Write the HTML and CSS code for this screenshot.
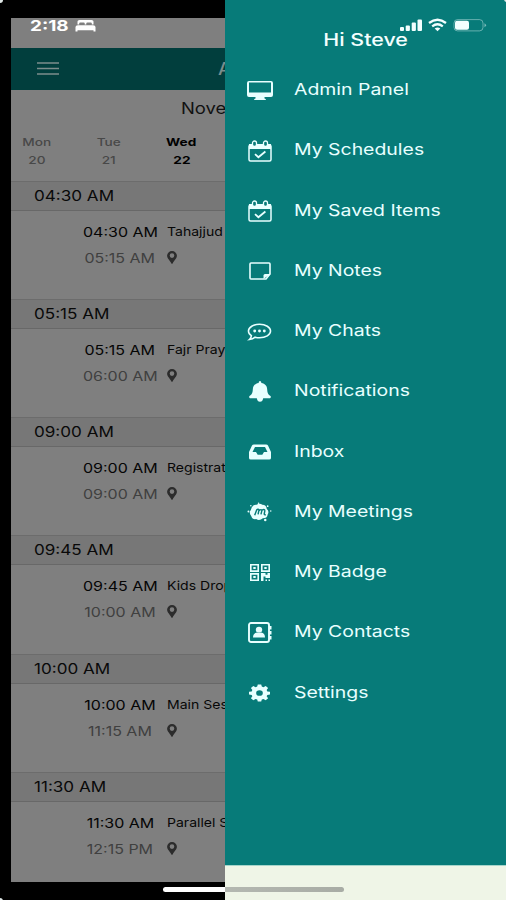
FILE: index.html
```html
<!DOCTYPE html>
<html lang="en">
<head>
<meta charset="utf-8">
<title>Schedule</title>
<link rel="stylesheet" href="styles.css">
</head>
<body>
<svg class="defs" width="0" height="0">
  <symbol id="pin" viewBox="0 0 10 13"><path fill-rule="evenodd" d="M5 0a4.9 4.7 0 0 0-4.9 4.7C.1 7.500 3.300 9.600 4.200 12.300q.8 1.100 1.600 0C6.700 9.600 9.900 7.500 9.900 4.700A4.900 4.700 0 0 0 5 0zm0 2.300a2.300 2.300 0 1 1 0 4.600 2.300 2.300 0 0 1 0-4.600z"/></symbol>
  <symbol id="calendar" viewBox="0 0 24 22"><rect x="1" y="5" width="22" height="16" rx="1.500" fill="none" stroke="currentColor" stroke-width="1.500"/><path d="M1 4h22v5H1z"/><rect x="4.500" y="1" width="4" height="5.500" rx="2" class="ring"/><rect x="15.500" y="1" width="4" height="5.500" rx="2" class="ring"/><path d="M7 14.200l3.400 3 7-5.700" fill="none" stroke="currentColor" stroke-width="1.800"/></symbol>
</svg>
<div class="phone">
  <section class="screen">
    <div class="clock"><span class="t">2:18</span>
      <svg width="21" height="13" viewBox="0 0 21 13"><path d="M2.500 5.500V2.500Q2.500 1 4.500 1h12q2 0 2 1.500v3h-1.700V4.300q0-.8-1-.8h-3.500q-1 0-1 .8v1.200H9.700V4.300q0-.8-1-.8H5.200q-1 0-1 .8v1.200zM.5 12.500V8q0-1.800 2.500-1.800h15q2.500 0 2.500 1.800v4.500h-2v-1.300h-16v1.300z"/></svg>
    </div>
    <header class="bar"><svg width="22" height="13" viewBox="0 0 22 13"><path d="M0 1h22M0 6.500h22M0 12h22" stroke="currentColor" stroke-width="1.700"/></svg><b class="t">Agenda</b></header>
    <div class="calendar">
      <div class="month"><span class="t">November</span></div>
      <div class="days">
        <div><span>Mon</span><span>20</span></div>
        <div><span>Tue</span><span>21</span></div>
        <div class="on"><span>Wed</span><span>22</span></div>
      </div>
    </div>
    <div class="list">
      <article><h2><span class="t">04:30 AM</span></h2><div class="row"><div class="times"><span>04:30 AM</span><span>05:15 AM</span></div><div class="info"><span class="t">Tahajjud</span><svg><use href="#pin"/></svg></div></div></article>
      <article><h2><span class="t">05:15 AM</span></h2><div class="row"><div class="times"><span>05:15 AM</span><span>06:00 AM</span></div><div class="info"><span class="t">Fajr Prayer</span><svg><use href="#pin"/></svg></div></div></article>
      <article><h2><span class="t">09:00 AM</span></h2><div class="row"><div class="times"><span>09:00 AM</span><span>09:00 AM</span></div><div class="info"><span class="t">Registration</span><svg><use href="#pin"/></svg></div></div></article>
      <article><h2><span class="t">09:45 AM</span></h2><div class="row"><div class="times"><span>09:45 AM</span><span>10:00 AM</span></div><div class="info"><span class="t">Kids Drop</span><svg><use href="#pin"/></svg></div></div></article>
      <article><h2><span class="t">10:00 AM</span></h2><div class="row"><div class="times"><span>10:00 AM</span><span>11:15 AM</span></div><div class="info"><span class="t">Main Session</span><svg><use href="#pin"/></svg></div></div></article>
      <article><h2><span class="t">11:30 AM</span></h2><div class="row"><div class="times"><span>11:30 AM</span><span>12:15 PM</span></div><div class="info"><span class="t">Parallel Session</span><svg><use href="#pin"/></svg></div></div></article>
    </div>
  </section>
  <aside class="drawer">
    <div class="hello"><span>Hi Steve</span></div>
    <nav>
      <a><svg viewBox="0 0 26 20" width="26" height="20"><path fill-rule="evenodd" d="M2 0h22q2 0 2 2v12q0 2-2 2h-6.500v1.500q1.500 0 1.500 1.500H7q0-1.500 1.500-1.500V16H2q-2 0-2-2V2q0-2 2-2zm0 1.600V11.500h22V1.600z"/></svg><span class="t">Admin Panel</span></a>
      <a><svg width="24" height="22"><use href="#calendar"/></svg><span class="t">My Schedules</span></a>
      <a><svg width="24" height="22"><use href="#calendar"/></svg><span class="t">My Saved Items</span></a>
      <a><svg viewBox="0 0 22 18" width="22" height="18"><path d="M1 2q0-1 1-1h18q1 0 1 1v10l-4 5H2q-1 0-1-1z" fill="none" stroke="currentColor" stroke-width="1.600"/><path d="M14.500 17v-3.500q0-1.500 1.500-1.500h5.500z"/></svg><span class="t">My Notes</span></a>
      <a><svg viewBox="0 0 26 18" width="25" height="18"><path d="M13 1c6.300 0 11.500 3 11.500 7s-5.200 7-11.500 7q-2.500 0-4.500-.6Q6 16.600 2.500 16.800q1.900-1.500 2.100-4Q1.500 11 1.500 8c0-4 5.200-7 11.500-7z" fill="none" stroke="currentColor" stroke-width="1.600"/><circle cx="8" cy="8" r="1.500"/><circle cx="13" cy="8" r="1.500"/><circle cx="18" cy="8" r="1.500"/></svg><span class="t">My Chats</span></a>
      <a><svg viewBox="0 0 22 21" width="22" height="21"><path d="M9.700 2q-.2-2 1.300-2t1.300 2c4 .6 5.700 3 5.900 6.500.2 4 1.300 5.300 3.300 6.500.8 1 .2 2.200-1 2.200h-6.300q-.6 3.500-3.200 3.500t-3.200-3.500h-6.300c-1.200 0-1.800-1.200-1-2.200 2-1.200 3.100-2.500 3.300-6.500C4 5 5.700 2.600 9.700 2z"/></svg><span class="t">Notifications</span></a>
      <a><svg viewBox="0 0 22 16" width="22" height="16"><path fill-rule="evenodd" d="M5 .5h12q1.500 0 2 1L22 8v6q0 1.500-1.800 1.500H1.800Q0 15.500 0 14V8l3-6.500q.5-1 2-1zM6 3L3.500 8H7l1.700 2.800h4.600L15 8h3.500L16 3z"/></svg><span class="t">Inbox</span></a>
      <a><svg viewBox="0 0 26 20" width="25" height="20"><path d="M5 5q2-3 5-2.500 3-2 6 0 4 0 4.500 4 3 3 1 6-.5 4-5 4-3.500 3-7 .8-4 .7-5-3Q1.500 10.500 4 8z"/><circle cx="12" cy=".8" r=".8"/><circle cx="21.500" cy="4" r=".9"/><circle cx="4" cy="3.500" r=".8"/><circle cx="1.500" cy="9.500" r="1"/><circle cx="24.700" cy="9" r=".8"/><circle cx="19" cy="18.300" r="1.300"/><path d="M8 13.500l2-5.500q1.500-1.600 2.500-.3L11.500 12.500M12.500 8.500q2.700-2 3 0l-1 4M15.500 8q3.500-1.500 3 1l-.6 2.800q0 1.500 1.600.8" fill="none" class="cut"/></svg><span class="t">My Meetings</span></a>
      <a><svg viewBox="0 0 20 17" width="20" height="17"><g fill="none" stroke="currentColor" stroke-width="1.600"><path d="M.8.800h7.400v6.300H.8zM11.800.800h7.400v6.300h-7.400zM.8 9.900h7.400v6.300H.8z"/></g><path d="M3.300 3h2.400v2H3.300zM14.300 3h2.400v2h-2.400zM3.300 12h2.400v2H3.300zM11 9h4.500v1.800h2V9H20v5h-4.500v-1.500h-2V17H11zM15.500 15.500h1.500V17h-1.500zM18.500 15.500H20V17h-1.500z"/></svg><span class="t">My Badge</span></a>
      <a><svg viewBox="0 0 24 21" width="24" height="21"><rect x="1" y="1" width="20" height="19" rx="2" fill="none" stroke="currentColor" stroke-width="1.900"/><path d="M21 4h2.500v3.500H21zM21 9h2.500v3.500H21zM21 14h2.500v3.500H21z"/><ellipse cx="11" cy="7.700" rx="3.200" ry="3"/><path d="M5 15.500q0-4.500 4-5 2 1 4 0 4 .5 4 5z"/></svg><span class="t">My Contacts</span></a>
      <a><svg viewBox="0 0 22 18" width="21" height="18"><path fill-rule="evenodd" d="M9.200 0h3.600l.6 2.300 1.700.6 2.400-1.200L20 3.800l-1.500 2 .7 1.500 2.800.4v2.900l-2.800.5-.7 1.400 1.500 2-2.500 2-2.400-1.200-1.700.6-.6 2.100H9.200l-.6-2.100-1.700-.6-2.400 1.200-2.500-2 1.500-2-.7-1.400-2.800-.5V7.700l2.800-.4.7-1.500-1.500-2 2.500-2.100 2.400 1.200 1.700-.6zM11 6a3.500 3 0 1 0 0 6 3.500 3 0 0 0 0-6z"/></svg><span class="t">Settings</span></a>
    </nav>
    <footer></footer>
  </aside>
  <svg class="signals" width="88" height="16" viewBox="0 0 88 16"><rect x="1" y="9" width="4" height="4" rx="1"/><rect x="6.700" y="7.500" width="4.200" height="5.500" rx="1"/><rect x="12.700" y="4.500" width="4.200" height="8.500" rx="1"/><rect x="18.500" y="1.500" width="4.500" height="11.500" rx="1"/><g fill="none" stroke="currentColor" stroke-width="2.300"><path d="M30 5q8.500-6.500 17 0M33.200 8.300q5.300-4 10.600 0"/></g><path d="M35.700 10.500q2.800-1.800 5.600 0L38.500 13.300z"/><rect x="55" y="1.600" width="29" height="11.300" rx="3.500" fill="none" stroke="currentColor" opacity=".4"/><path d="M85.500 5.200q3 2 0 4z" opacity=".5"/><rect x="56" y="2.800" width="14" height="9" rx="2"/></svg>
  <div class="home"></div>
  <i class="corner a"></i><i class="corner b"></i><i class="corner c"></i>
</div>
</body>
</html>
```

FILE: styles.css
```css
* { box-sizing: border-box; }
body { margin: 0; background: #000; font-family: Inter, "Liberation Sans", sans-serif; }
.defs { position: absolute; }
svg { fill: currentColor; flex: none; display: block; }
.t { display: inline-block; transform-origin: 0 50%; white-space: nowrap; }
.phone { position: relative; display: flex; width: 506px; height: 900px; overflow: hidden; background: #000; }
.screen { width: 214px; height: 864px; margin: 18px 0 0 11px; background: #7f7f7f; overflow: hidden; flex: none; }

.clock { height: 30px; padding: 0 0 15px 19px; display: flex; align-items: center; color: #fff; font-size: 15px; font-weight: 700; }
.clock .t { width: 45px; transform: scaleX(1.26); }
.bar { height: 42px; padding-left: 26px; display: flex; align-items: center; background: #013e3d; color: #7c8d8c; }
.bar svg { margin-top: -1px; }
.bar .t { margin-left: 159px; font-size: 17px; font-weight: 500; transform: scaleX(1.1); }
.calendar { height: 91px; }
.month { height: 43px; padding-left: 170px; line-height: 36px; font-size: 16px; color: #111; }
.month .t { transform: scaleX(1.15); }
.days { display: flex; }
.days div { flex: none; display: flex; flex-direction: column; align-items: center; line-height: 18px; font-size: 11px; font-weight: 500; color: #484848; }
.days div:first-child { width: 51px; }
.days div:nth-child(2) { width: 93px; }
.days div:nth-child(3) { width: 53px; }
.days span { transform: scaleX(1.24); }
.days .on { color: #000; font-weight: 700; }

article { height: 118.150px; }
h2 { margin: 0; height: 30px; padding-left: 23px; background: #777; border-top: 1px solid #6c6c6c; border-bottom: 1px solid #686868; font-size: 14px; font-weight: 400; line-height: 28px; color: #090909; }
h2 .t { transform: scaleX(1.22); }
.row { display: flex; padding: 8px 0 0 72px; }
.times { width: 74px; flex: none; margin-right: 10px; display: flex; flex-direction: column; align-items: center; font-size: 13px; line-height: 26px; color: #050505; }
.times span { transform: scaleX(1.23); white-space: nowrap; }
.times span + span { color: #404040; }
.info { flex: none; font-size: 12px; line-height: 26px; color: #070707; }
.info .t { display: block; transform: scaleX(1.17); }
.info svg { width: 10px; height: 13px; margin-top: 6px; color: #2c2c2c; }

.drawer { width: 281px; height: 900px; display: flex; flex-direction: column; background: #077b79; color: #e8ffff; flex: none; }
.hello { height: 58px; padding-top: 20px; text-align: center; font-size: 17px; font-weight: 500; line-height: 40px; color: #f4ffff; }
.hello span { display: inline-block; transform: scaleX(1.26); }
nav { flex: 1; }
nav a { height: 60.250px; display: grid; grid-template-columns: 69px 1fr; align-items: center; font-size: 16px; line-height: 62px; }
nav svg { justify-self: center; margin-top: 3px; }
nav .t { transform: scaleX(1.215); }
.ring { fill: #077b79; stroke: currentColor; stroke-width: 1.300; }
.cut { stroke: #077b79; stroke-width: 1.500; }
footer { height: 35px; background: #eff5e7; border-top: 1px solid #a6d5cb; }
.signals { position: absolute; left: 399px; top: 18px; color: #f2ffff; }
.home { position: absolute; left: 163px; top: 887px; width: 181px; height: 5px; border-radius: 3px; background: linear-gradient(90deg, #fff 62px, #b4b8b1 62px, #a8aca5); }
.corner { position: absolute; width: 6px; height: 6px; border-radius: 50%; background: #dfe7e6; }
.a { left: -3px; top: -3px; }
.b { right: -4px; top: -4px; }
.c { left: -3px; bottom: -4px; }
```
